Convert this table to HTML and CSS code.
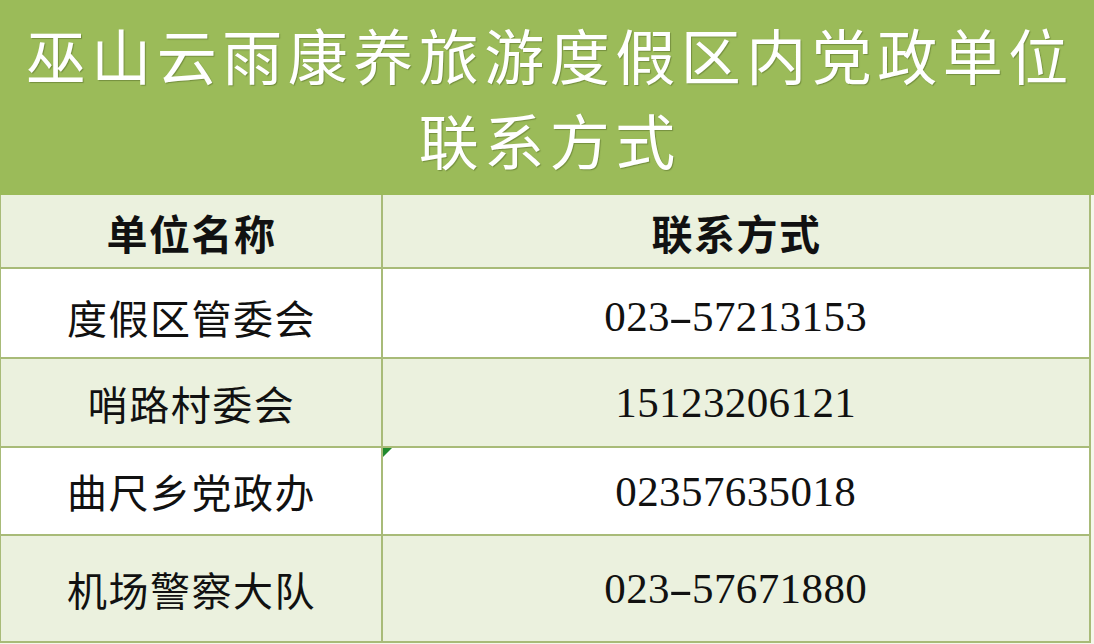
FILE: index.html
```html
<!DOCTYPE html>
<html lang="zh-CN">
<head>
<meta charset="utf-8">
<title>巫山云雨康养旅游度假区内党政单位联系方式</title>
<link rel="stylesheet" href="styles.css">
</head>
<body>
<div class="sheet">
  <header class="title">
    <div class="title-line">巫山云雨康养旅游度假区内党政单位</div>
    <div class="title-line">联系方式</div>
  </header>
  <table class="contacts">
    <colgroup>
      <col class="col-name">
      <col class="col-phone">
    </colgroup>
    <thead>
      <tr class="row-head">
        <th>单位名称</th>
        <th>联系方式</th>
      </tr>
    </thead>
    <tbody>
      <tr class="row-1">
        <td class="name">度假区管委会</td>
        <td class="phone">023<span class="dash">-</span>57213153</td>
      </tr>
      <tr class="row-2 alt">
        <td class="name">哨路村委会</td>
        <td class="phone">15123206121</td>
      </tr>
      <tr class="row-3">
        <td class="name">曲尺乡党政办</td>
        <td class="phone flagged"><span class="flag"></span>02357635018</td>
      </tr>
      <tr class="row-4 alt">
        <td class="name">机场警察大队</td>
        <td class="phone">023<span class="dash">-</span>57671880</td>
      </tr>
    </tbody>
  </table>
</div>
</body>
</html>
```

FILE: styles.css
```css
html, body {
  margin: 0;
  padding: 0;
  background: #f4f7ec;
}

.sheet {
  width: 1094px;
  height: 644px;
  overflow: hidden;
  background: #f4f7ec;
}

.title {
  height: 195px;
  box-sizing: border-box;
  padding-top: 11px;
  background: #9bbb59;
  color: #ffffff;
  text-align: center;
  font-family: "Noto Sans CJK SC", "Noto Sans", sans-serif;
  font-weight: 400;
  font-size: 60px;
  line-height: 85px;
  letter-spacing: 5.5px;
  text-indent: 5.5px;
  text-shadow: 1px 1px 1px rgba(70, 90, 30, 0.45);
}

.title-line {
  white-space: nowrap;
}

.contacts {
  width: 1091px;
  border-collapse: collapse;
  table-layout: fixed;
  background: #ffffff;
}

.col-name {
  width: 381px;
}

.contacts th,
.contacts td {
  border: 2px solid #a8bb78;
  padding: 0;
  text-align: center;
  vertical-align: middle;
  color: #111111;
}

.contacts thead th {
  border-top: none;
}

.contacts tr > :first-child {
  border-left: 1px solid #a8bb78;
}

.row-head th {
  height: 70px;
  background: #ebf1de;
  font-family: "Noto Sans CJK SC", "Noto Sans", sans-serif;
  font-weight: 700;
  font-size: 41px;
  letter-spacing: 1.5px;
  text-indent: 1.5px;
  padding-top: 2px;
}

.alt td {
  background: #ebf1de;
}

.row-1 td { height: 81px; }
.row-2 td { height: 87px; }
.row-3 td { height: 86px; }
.row-4 td { height: 105px; }

.name {
  font-family: "Noto Sans CJK SC", "Noto Sans", sans-serif;
  font-weight: 400;
  font-size: 40px;
  letter-spacing: 1.5px;
  text-indent: 1.5px;
}

.row-1 .name { padding-top: 7px; }
.row-1 .phone { padding-top: 7px; }

.phone {
  font-family: "Liberation Serif", "DejaVu Serif", serif;
  font-size: 43px;
  letter-spacing: 0.4px;
}

.dash {
  display: inline-block;
  width: 22px;
  text-align: center;
  transform: scaleX(1.7);
}

.flagged {
  position: relative;
}

.flag {
  position: absolute;
  left: 0;
  top: 0;
  width: 0;
  height: 0;
  border-top: 9px solid #1f8a2e;
  border-right: 9px solid transparent;
}
```
